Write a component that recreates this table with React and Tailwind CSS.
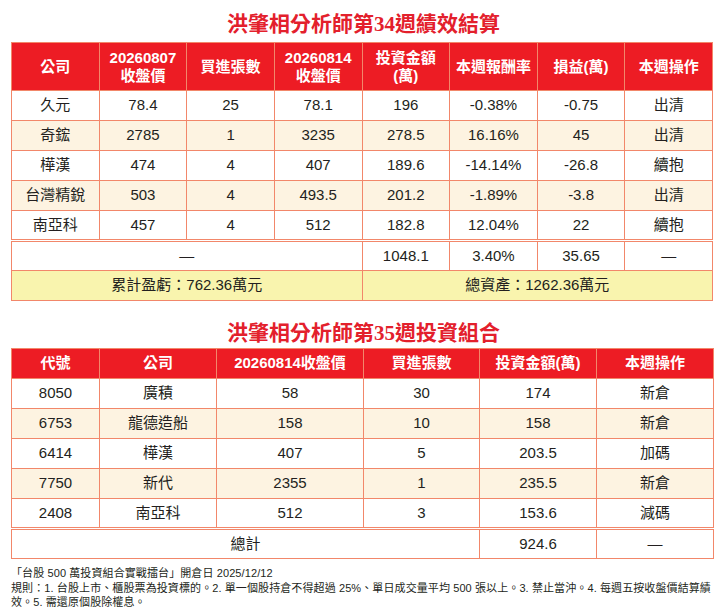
import clsx from 'clsx'

const WEEK34 = [
  ['久元', '78.4', '25', '78.1', '196', '-0.38%', '-0.75', '出清'],
  ['奇鋐', '2785', '1', '3235', '278.5', '16.16%', '45', '出清'],
  ['樺漢', '474', '4', '407', '189.6', '-14.14%', '-26.8', '續抱'],
  ['台灣精銳', '503', '4', '493.5', '201.2', '-1.89%', '-3.8', '出清'],
  ['南亞科', '457', '4', '512', '182.8', '12.04%', '22', '續抱'],
]

const WEEK35 = [
  ['8050', '廣積', '58', '30', '174', '新倉'],
  ['6753', '龍德造船', '158', '10', '158', '新倉'],
  ['6414', '樺漢', '407', '5', '203.5', '加碼'],
  ['7750', '新代', '2355', '1', '235.5', '新倉'],
  ['2408', '南亞科', '512', '3', '153.6', '減碼'],
]

const H1 = [
  ['公司'],
  ['20260807', '收盤價'],
  ['買進張數'],
  ['20260814', '收盤價'],
  ['投資金額', '(萬)'],
  ['本週報酬率'],
  ['損益(萬)'],
  ['本週操作'],
]

const H2 = ['代號', '公司', '20260814收盤價', '買進張數', '投資金額(萬)', '本週操作']
const W2 = ['w-[88px]', 'w-[117px]', 'w-[147px]', 'w-[116px]', 'w-[117px]', 'w-[117px]']

const td = 'border border-[#f2876a] p-0 text-center align-middle'
const th = 'border border-[#f2876a] p-0 text-center align-middle text-white font-bold text-[15px]'

function Title({ children, className }) {
  return (
    <div className={clsx("text-center text-[21px] leading-[22px] font-bold text-[#e3202c] font-['Liberation_Serif','Noto_Sans_CJK_TC',serif]", className)}>
      {children}
    </div>
  )
}

export default function App() {
  return (
    <div className="w-[727px] h-[611px] bg-white text-[#231f20] font-['Liberation_Sans','Noto_Sans_CJK_TC',sans-serif] overflow-hidden">
      <Title className="pt-[13px] pb-[7px]">洪肇相分析師第34週績效結算</Title>

      <table className="ml-[11px] w-[702px] table-fixed text-[15px]">
        <thead>
          <tr className="bg-[#ed1c24]">
            {H1.map((h, i) => (
              <th key={i} className={clsx(th, 'h-[48px] leading-[18px]')}>
                {h.map((l, j) => <div key={j}>{l}</div>)}
              </th>
            ))}
          </tr>
        </thead>
        <tbody>
          {WEEK34.map((r, i) => (
            <tr key={i} className={i % 2 ? 'bg-[#fdf3e1]' : 'bg-white'}>
              {r.map((c, j) => <td key={j} className={clsx(td, 'h-[30px]')}>{c}</td>)}
            </tr>
          ))}
          <tr className="bg-white">
            <td colSpan={4} className={clsx(td, 'h-[30px] border-t-[3px] border-double')}>—</td>
            <td className={clsx(td, 'border-t-[3px] border-double')}>1048.1</td>
            <td className={clsx(td, 'border-t-[3px] border-double')}>3.40%</td>
            <td className={clsx(td, 'border-t-[3px] border-double')}>35.65</td>
            <td className={clsx(td, 'border-t-[3px] border-double')}>—</td>
          </tr>
          <tr className="bg-[#f9f4ae]">
            <td colSpan={4} className={clsx(td, 'h-[30px]')}>累計盈虧：762.36萬元</td>
            <td colSpan={4} className={td}>總資產：1262.36萬元</td>
          </tr>
        </tbody>
      </table>

      <Title className="pt-[21px] pb-[4px]">洪肇相分析師第35週投資組合</Title>

      <table className="ml-[11px] w-[702px] table-fixed text-[15px]">
        <thead>
          <tr className="bg-[#ed1c24]">
            {H2.map((h, i) => (
              <th key={i} className={clsx(th, W2[i], 'h-[30px]')}>{h}</th>
            ))}
          </tr>
        </thead>
        <tbody>
          {WEEK35.map((r, i) => (
            <tr key={i} className={i % 2 ? 'bg-[#fdf3e1]' : 'bg-white'}>
              {r.map((c, j) => <td key={j} className={clsx(td, 'h-[30px]')}>{c}</td>)}
            </tr>
          ))}
          <tr className="bg-white">
            <td colSpan={4} className={clsx(td, 'h-[30px] border-t-[3px] border-double')}>總計</td>
            <td className={clsx(td, 'border-t-[3px] border-double')}>924.6</td>
            <td className={clsx(td, 'border-t-[3px] border-double')}>—</td>
          </tr>
        </tbody>
      </table>

      <div className="px-[11px] pt-[7px] text-[11px] leading-[14px] tracking-[0.1px] whitespace-nowrap">
        <div className="mb-px">「台股 500 萬投資組合實戰擂台」開倉日 2025/12/12</div>
        <div>規則：1. 台股上市、櫃股票為投資標的。2. 單一個股持倉不得超過 25%、單日成交量平均 500 張以上。3. 禁止當沖。4. 每週五按收盤價結算績</div>
        <div>效。5. 需還原個股除權息。</div>
      </div>
    </div>
  )
}
